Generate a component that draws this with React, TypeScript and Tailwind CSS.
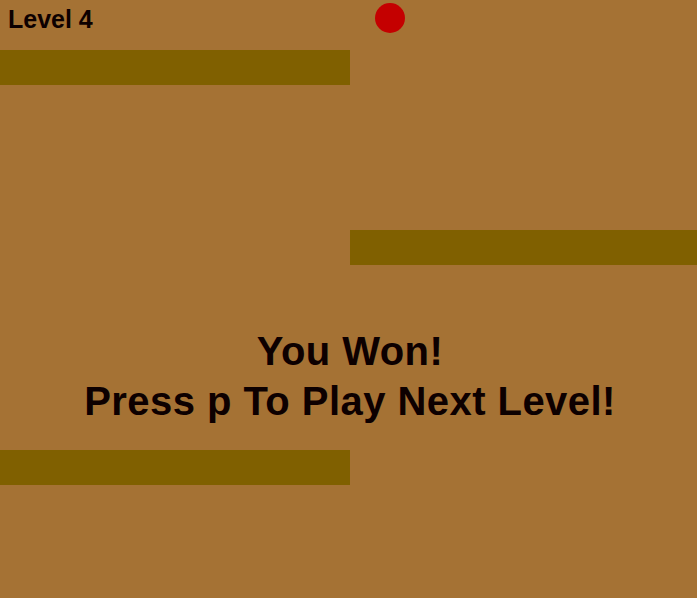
import React from 'react'

const FONT = "font-['Liberation_Sans',Arial,sans-serif]"

export default function App() {
  return (
    <div className={`relative w-[697px] h-[598px] overflow-hidden bg-[#a57234] ${FONT}`}>
      {/* platforms */}
      <div className="mt-[50px] h-[35px] w-[350px] bg-[#806000]" />
      <div className="mt-[145px] ml-[350px] h-[35px] w-[347px] bg-[#806000]" />
      <div className="mt-[185px] h-[35px] w-[350px] bg-[#806000]" />

      {/* hud */}
      <div className="absolute left-[8px] top-[7px] text-[25px] leading-[25px] font-bold text-[#0d0000]">
        Level 4
      </div>

      {/* ball */}
      <div className="absolute left-[375px] top-[3px] h-[30px] w-[30px] rounded-full bg-[#c40000]" />

      {/* message */}
      <div className="absolute inset-x-0 top-[326px] pl-[3px] text-center text-[40px] leading-[50px] font-bold tracking-[0.45px] text-[#0d0000]">
        <div>You Won!</div>
        <div>Press p To Play Next Level!</div>
      </div>
    </div>
  )
}
